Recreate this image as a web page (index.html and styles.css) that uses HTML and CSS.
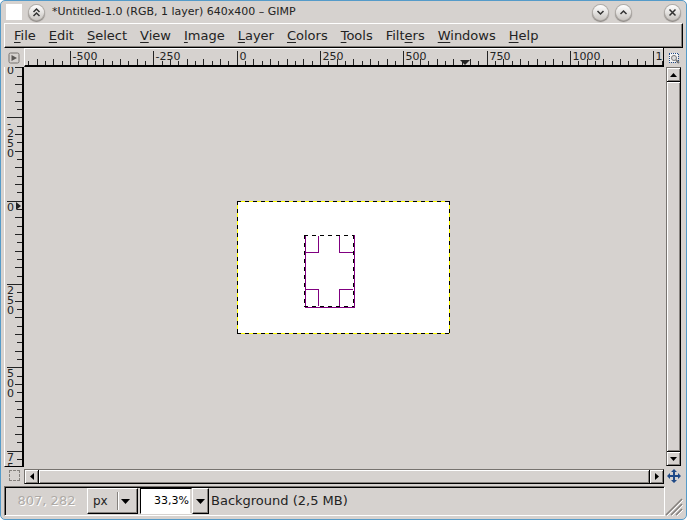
FILE: index.html
```html
<!DOCTYPE html>
<html lang="en">
<head>
<meta charset="utf-8">
<title>*Untitled-1.0 (RGB, 1 layer) 640x400 – GIMP</title>
<link rel="stylesheet" href="styles.css">
</head>
<body>
<div class="window">
  <header class="titlebar">
    <span class="app-icon"></span>
    <button class="round" aria-label="Shade"><svg viewBox="0 0 15 15"><path d="M4.500 7 7.500 4 10.500 7M4.500 11 7.500 8 10.500 11"/></svg></button>
    <h1>*Untitled-1.0 (RGB, 1 layer) 640x400 – GIMP</h1>
    <button class="round" aria-label="Minimize"><svg viewBox="0 0 15 15"><path d="M4.500 6 7.500 9 10.500 6"/></svg></button>
    <button class="round" aria-label="Maximize"><svg viewBox="0 0 15 15"><path d="M4.500 9 7.500 6 10.500 9"/></svg></button>
    <button class="round close" aria-label="Close"><svg viewBox="0 0 15 15"><path d="M4.500 4.500 10.500 10.500M10.500 4.500 4.500 10.500"/></svg></button>
  </header>
  <nav class="menubar">
    <button><u>F</u>ile</button><button><u>E</u>dit</button><button><u>S</u>elect</button><button><u>V</u>iew</button><button><u>I</u>mage</button><button><u>L</u>ayer</button><button><u>C</u>olors</button><button><u>T</u>ools</button><button>Filt<u>e</u>rs</button><button><u>W</u>indows</button><button><u>H</u>elp</button>
  </nav>
  <main class="workspace">
    <button class="corner" aria-label="Image menu"><svg width="12" height="12" viewBox="0 0 12 12"><rect x="1" y="1" width="10" height="10" rx="1.500" fill="none" stroke="#77736f"/><path d="M3.500 3 9 6 3.500 9Z" fill="#5a5754"/></svg></button>
    <svg class="ruler ruler-h" id="ruler-h"></svg>
    <button class="corner" aria-label="Zoom when window resizes"><svg width="12" height="12" viewBox="0 0 12 12"><rect x="1" y="1" width="9" height="9" fill="#f4f4f4" stroke="#204a87" stroke-dasharray="1 1" shape-rendering="crispEdges"/><circle cx="6" cy="6" r="2.500" fill="#ddd" stroke="#777"/><path d="m8 8 3 3" stroke="#777" stroke-width="2"/></svg></button>
    <svg class="ruler ruler-v" id="ruler-v"></svg>
    <section class="canvas">
      <svg id="image" width="213" height="133" viewBox="0 0 213 133" shape-rendering="crispEdges">
        <rect width="213" height="133" fill="#fff"/>
        <rect class="layer-edge" x=".5" y=".5" width="212" height="132"/>
        <path class="ants" d="M0 .5H213M0 132.500H213M.5 0V133M212.500 0V133"/>
        <path class="guide" d="M68.500 35V106M68 106.500H118M117.500 34V107M81.500 35V51M69 51.500H82M102.500 35V51M102 51.500H117M81.500 88V105M69 88.500H82M102.500 88V105M102 88.500H116"/>
        <path class="ants" d="M67 34.500H117M67.500 34V106M116.500 34V106M67 105.500H117"/>
      </svg>
    </section>
    <div class="scroll scroll-v">
      <button aria-label="Scroll up"><svg width="7" height="4"><path d="M0 4 3.500 0 7 4Z"/></svg></button>
      <span class="thumb"></span>
      <button aria-label="Scroll down"><svg width="7" height="4"><path d="M0 0H7L3.500 4Z"/></svg></button>
    </div>
    <button class="corner" aria-label="Quick mask"><svg width="11" height="11" shape-rendering="crispEdges"><path d="M0 .5H3M4 .5H7M8 .5H11M0 10.500H3M4 10.500H7M8 10.500H11M.5 0V3M.5 4V7M.5 8V11M10.500 0V3M10.500 4V7M10.500 8V11" stroke="#85817d"/></svg></button>
    <div class="scroll scroll-h">
      <button aria-label="Scroll left"><svg width="4" height="7"><path d="M4 0V7L0 3.500Z"/></svg></button>
      <span class="thumb"></span>
      <button aria-label="Scroll right"><svg width="4" height="7"><path d="M0 0 4 3.500 0 7Z"/></svg></button>
    </div>
    <button class="corner" aria-label="Navigate"><svg width="14" height="14" viewBox="0 0 14 14"><path d="M7 0 10 3H8V6H11V4L14 7 11 10V8H8V11H10L7 14 4 11H6V8H3V10L0 7 3 4V6H6V3H4Z" fill="#204a87"/></svg></button>
  </main>
  <footer class="status">
    <div class="status-frame">
      <output class="coords">807, 282</output>
      <label class="unit"><select aria-label="Unit"><option>px</option></select><i></i><svg width="9" height="5"><path d="M0 0H9L4.500 5Z"/></svg></label>
      <div class="zoom"><input aria-label="Zoom" value="33,3%"><button aria-label="Zoom levels"><svg width="9" height="5"><path d="M0 0H9L4.500 5Z"/></svg></button></div>
      <span class="message">Background (2,5 MB)</span>
    </div>
    <svg class="grip" width="18" height="18" viewBox="0 0 18 18"><path d="M2 18 18 2M7 18 18 7M12 18 18 12" stroke="#fff"/><path d="M1 17 17 1M6 17 17 6M11 17 17 11" stroke="#85817d" stroke-width="1.500"/></svg>
  </footer>
</div>
<script src="rulers.js"></script>
</body>
</html>
```
FILE: styles.css
```css
* { box-sizing: border-box; }
body { margin: 0; background: #fff; color: #232323; font: 13px/16px "DejaVu Sans", sans-serif; }
button, input, select { font: inherit; color: inherit; margin: 0; padding: 0; border: 0; border-radius: 0; background: none; }
svg { display: block; }
.window { height: 100vh; display: flex; flex-direction: column; border: 1px solid #559bc9; border-radius: 5px; background: #d6d2cf; padding: 0 3px 3px; }
.titlebar { display: flex; align-items: center; height: 22px; padding: 0 3px 0 2px; flex: none; }
.app-icon { width: 16px; height: 16px; background: #fff; margin-right: 7px; }
.round { width: 15px; height: 15px; border-radius: 50%; background: linear-gradient(#fff, #c9c5c1); box-shadow: 0 0 0 1px #b1ada9, 0 1px 1px 1px #8a8682; margin-right: 8px; }
.round svg { fill: none; stroke: #333; stroke-width: 1.500; }
.round.close { margin: 0 0 0 26px; }
h1 { margin: 0; flex: 1; font: 11px/16px "DejaVu Sans", sans-serif; white-space: nowrap; }
.menubar { display: flex; gap: 1px; flex: none; height: 25px; border: 1px solid; border-color: #fff #000 #000 #fff; box-shadow: inset -1px -1px #85817d; padding-left: 3px; }
.menubar button { padding: 0 6px; }
.menubar u { text-underline-offset: 2px; }
.workspace { flex: 1; min-height: 0; display: grid; grid-template-columns: 20px 1fr 19px; grid-template-rows: 19px 1fr 17px; }
.corner { display: grid; place-items: center; }
.ruler { width: 100%; height: 100%; overflow: hidden; font-size: 11px; fill: #232323; }
.ruler .ticks { stroke: #232323; shape-rendering: crispEdges; }
.ruler-h { border: solid #000; border-width: 0 1px 2px 0; border-left: 1px solid #fff; box-shadow: inset 0 1px #fff; }
.ruler-v { border: solid #000; border-width: 0 2px 1px 0; border-left: 1px solid #fff; }
.canvas { display: flex; align-items: center; justify-content: center; min-width: 0; min-height: 0; padding-right: 2px; }
.layer-edge { fill: none; stroke: #ff0; }
.ants { fill: none; stroke: #000; stroke-dasharray: 4 4; }
.guide { fill: none; stroke: #800080; }
.scroll { display: flex; border: 1px solid; border-color: #77736f #000 #000 #77736f; min-width: 0; min-height: 0; }
.scroll button { flex: none; display: grid; place-items: center; }
.scroll-v { flex-direction: column; margin: 0 2px 1px; }
.scroll-h { margin-top: 2px; }
.scroll-v button { height: 13px; }
.scroll-h button { width: 13px; }
.thumb { flex: 1; }
.scroll button, .thumb { box-shadow: inset 1px 1px #fff, inset -1px -1px #85817d; }
.scroll-v .thumb { border: solid #000; border-width: 1px 0; }
.scroll-h .thumb { border: solid #000; border-width: 0 1px; }
.status { flex: none; display: flex; align-items: flex-end; margin-top: 2px; }
.status-frame { flex: 1; display: flex; align-items: center; height: 30px; border: 1px solid; border-color: #77736f #fff #fff #77736f; box-shadow: inset 1px 1px #000; padding: 1px 0 1px 1px; }
.coords { width: 81px; text-align: center; color: #aeaaa6; text-shadow: 1px 1px #fff; }
.unit, .zoom button { border: 1px solid; border-color: #fff #000 #000 #fff; box-shadow: inset -1px -1px #85817d; }
.unit { width: 51px; height: 26px; display: flex; align-items: center; padding: 0 7px 0 5px; }
.unit select { appearance: none; flex: 1; min-width: 0; font-size: 12px; }
.unit i { width: 2px; height: 18px; border-left: 1px solid #85817d; border-right: 1px solid #fff; margin-right: 2px; }
.zoom { display: flex; height: 26px; margin: 0 2px; }
.zoom input { width: 52px; border: 1px solid; border-color: #000 #d6d2ce #fff #000; box-shadow: inset -1px 0 #d6d2ce; background: #fff; padding-right: 2px; font-size: 11px; text-align: right; color: #000; }
.zoom button { width: 17px; display: grid; place-items: center; }
```
FILE: rulers.js
```js
const STEP = 25 / 3;

// Pointer position relative to the image corner, in screen pixels.
const POINTER = { x: 228, y: 5 };

function drawRuler(svg, origin, length, vertical) {
  let ticks = "";
  let labels = "";
  const first = Math.floor(-origin / STEP / 10) * 10;
  for (let i = first; origin + i * STEP < length; i++) {
    const at = Math.round(origin + i * STEP - 0.2) + 0.5;
    const start = i % 10 === 0 ? 3 : i % 2 === 0 ? 11 : 13;
    ticks += vertical ? `M${start - 1} ${at}H17` : `M${at} ${start}V17`;
    if (i % 10 === 0) {
      const value = String(i * 25);
      if (vertical) {
        [...value].forEach((c, n) => {
          const y = at + 9 + n * 10;
          if (y > 0) labels += `<text x="2" y="${y}">${c}</text>`;
        });
      } else if (at > 0) {
        labels += `<text x="${at + 2}" y="12">${value}</text>`;
      }
    }
  }
  const p = origin + (vertical ? POINTER.y : POINTER.x);
  const marker = vertical
    ? `M11 ${p - 4}V${p + 4}L16 ${p}Z`
    : `M${p - 5} 12H${p + 5}L${p} 17Z`;
  svg.innerHTML = `<path class="ticks" d="${ticks}"/>${labels}<path d="${marker}"/>`;
}

function layout() {
  const image = document.getElementById("image").getBoundingClientRect();
  const h = document.getElementById("ruler-h");
  const v = document.getElementById("ruler-v");
  const hb = h.getBoundingClientRect();
  const vb = v.getBoundingClientRect();
  drawRuler(h, Math.round(image.left - hb.left - 1), hb.width, false);
  drawRuler(v, Math.round(image.top - vb.top), vb.height, true);
}

layout();
window.addEventListener("resize", layout);
```
